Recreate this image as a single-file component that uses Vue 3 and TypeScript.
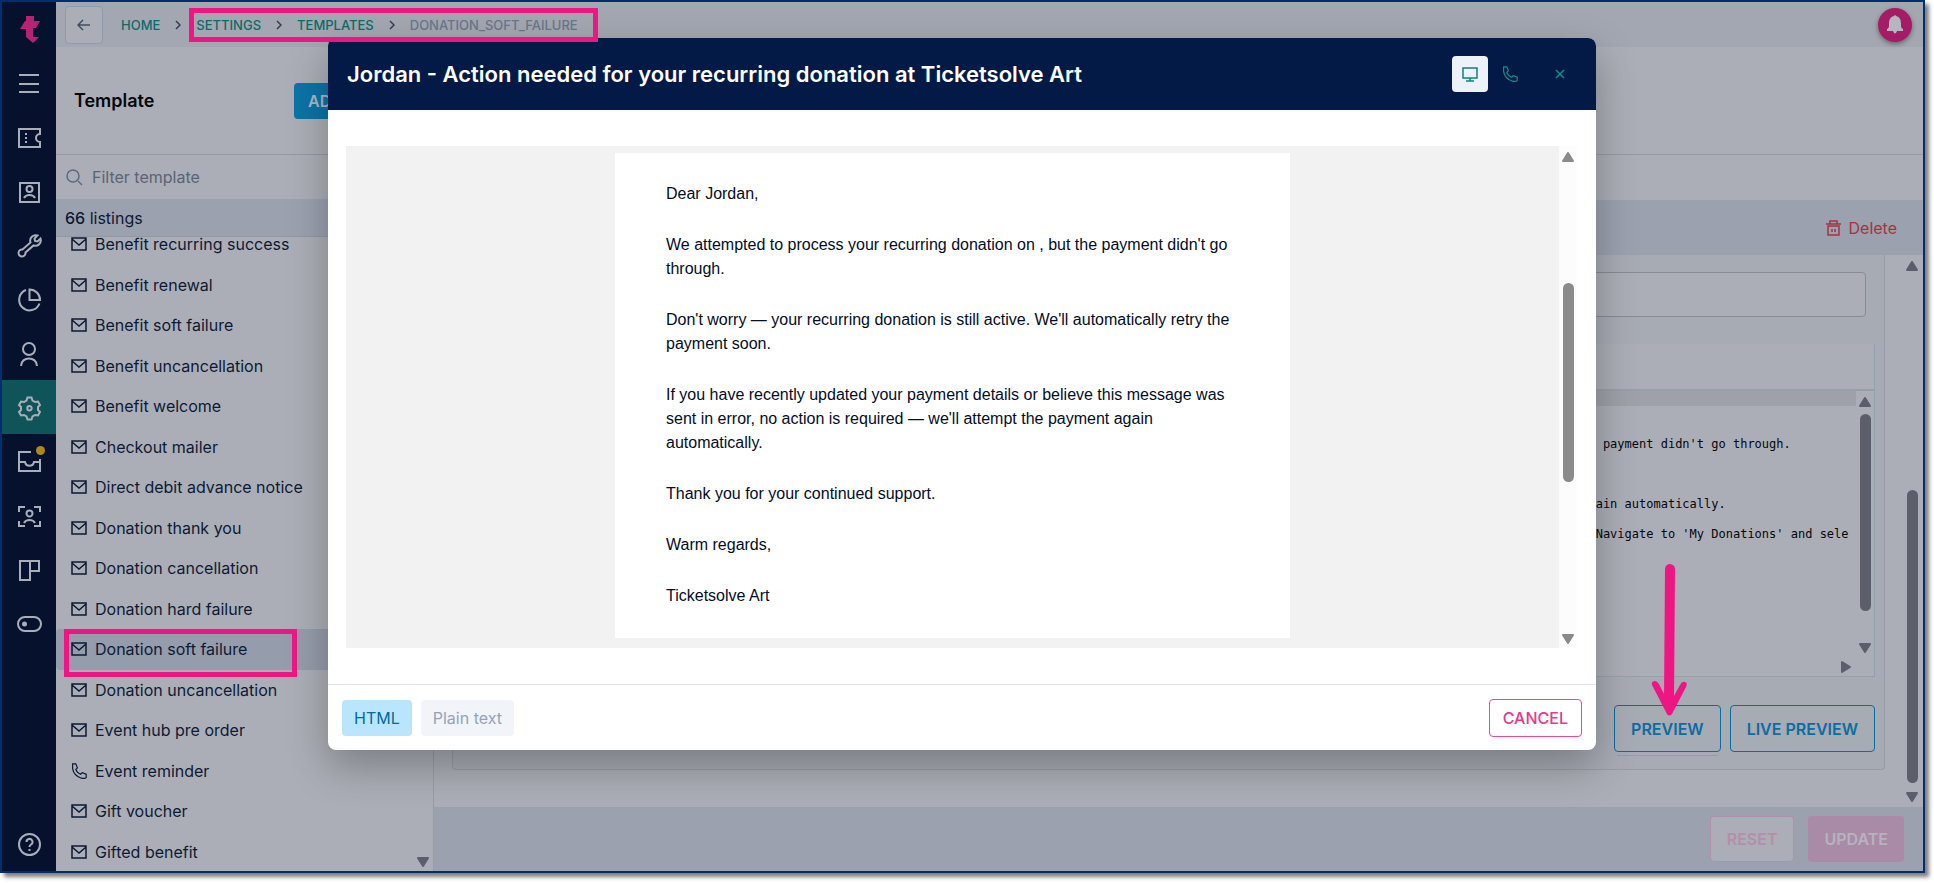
<script setup lang="ts">
import { ref } from 'vue'

interface RailItem {
  label: string
  path: string
  active?: boolean
  badge?: boolean
}

const railItems: RailItem[] = [
  { label: 'Menu', path: 'M2 3h20M2 12h20M2 20h20' },
  { label: 'Tickets', path: 'M2 3h21v5a4 4 0 0 0 0 8v5H2zM9 7v2M9 11v2M9 15v2' },
  { label: 'Contacts', path: 'M3 3h19v19H3zM12.500 6a3 3 0 1 1 0 6a3 3 0 0 1 0-6M7 18c2-4 9-4 11 0' },
  { label: 'Tools', path: 'M13.500 8.500A5.500 5.500 0 0 1 20.500 1.500L17.500 4.500l.500 2.500 2.500.500L23.500 4.500A5.500 5.500 0 0 1 16.500 11.500L8.500 18.500a3.500 3.500 0 1 1-3-3z' },
  { label: 'Reports', path: 'M9 2A10.500 10.500 0 1 0 22.500 15.500M12.500 1.500v10.500h10.500A10.500 10.500 0 0 0 12.500 1.500z' },
  { label: 'Customers', path: 'M12 1a6 6 0 1 1 0 12a6 6 0 0 1 0-12M4 24c0-10 16-10 16 0' },
  {
    label: 'Settings',
    path: 'M9.500 4.500L10.500 1.500h4l1 3 2.500 1.500 3-.500 2 3.500-2 2v3l2 2-2 3.500-3-.500-2.500 1.500-1 3h-4l-1-3L7 19l-3 .500-2-3.500 2-2v-3l-2-2L4 5.500 7 6zM12.500 10a2.200 2.200 0 1 1 0 4.400a2.200 2.200 0 0 1 0-4.400',
    active: true
  },
  { label: 'Inbox', path: 'M14 2H2v19h21V9M2 12h6c1 5 8 5 9 0h6', badge: true },
  { label: 'Scan', path: 'M2 8V3h6M17 3h6v5M23 17v5h-6M8 22H2v-5M12.500 6.500a3 3 0 1 1 0 6a3 3 0 0 1 0-6M7 19c2-4 9-4 11 0' },
  { label: 'Layout', path: 'M3 3h19v10h-9v9H3zM13 3v10' },
  { label: 'Toggles', path: 'M8 5h9a7 7 0 0 1 0 14H8A7 7 0 0 1 8 5zM7.500 10.500a1.500 1.500 0 1 1 0 3a1.500 1.500 0 0 1 0-3M7 12h1' }
]

const crumbs = ['HOME', 'SETTINGS', 'TEMPLATES']

const templates = [
  'Benefit recurring success',
  'Benefit renewal',
  'Benefit soft failure',
  'Benefit uncancellation',
  'Benefit welcome',
  'Checkout mailer',
  'Direct debit advance notice',
  'Donation thank you',
  'Donation cancellation',
  'Donation hard failure',
  'Donation soft failure',
  'Donation uncancellation',
  'Event hub pre order',
  'Event reminder',
  'Gift voucher',
  'Gifted benefit'
]
const selected = ref('Donation soft failure')
const filter = ref('')

const paragraphs = [
  'Dear Jordan,',
  "We attempted to process your recurring donation on , but the payment didn't go through.",
  "Don't worry — your recurring donation is still active. We'll automatically retry the payment soon.",
  "If you have recently updated your payment details or believe this message was sent in error, no action is required — we'll attempt the payment again automatically.",
  'Thank you for your continued support.',
  'Warm regards,',
  'Ticketsolve Art'
]

const source = ref(
  ["the payment didn't go through.", '', ' again automatically.', "   Navigate to 'My Donations' and sele"].join('\n')
)
const format = ref<'html' | 'text'>('html')
const phonePath =
  'M2 1h4l2 5-2 2c1 3 3 5 6 6l2-2 5 2v4c-1 2-4 1-6 1C7 17 3 13 2 7z'
</script>

<template>
  <div class="frame">
    <nav class="rail" aria-label="Main">
      <a href="#" class="rail-item" aria-label="Ticketsolve">
        <svg width="21" height="29" viewBox="0 0 21 29" class="logo">
          <path d="M7 1h8v5h6l-4 7h-3v9h6l-6 6-7-6v-8H1l5-8h1z" />
        </svg>
      </a>
      <a
        v-for="item in railItems"
        :key="item.label"
        href="#"
        class="rail-item section"
        :class="{ active: item.active }"
        :aria-label="item.label"
      >
        <svg width="25" height="25" viewBox="0 0 25 25" class="line-icon"><path :d="item.path" /></svg>
        <span v-if="item.badge" class="badge"></span>
      </a>
      <a href="#" class="rail-item help" aria-label="Help">
        <svg width="25" height="25" viewBox="0 0 25 25" class="line-icon">
          <circle cx="12.500" cy="12.500" r="10.500" />
          <path d="M9.500 10a3 3 0 1 1 4.500 2.500q-1.500 1-1.500 2.500M12.500 17v2" />
        </svg>
      </a>
    </nav>

    <div class="work">
      <header class="topbar">
        <button type="button" class="back" aria-label="Back">
          <svg width="14" height="12" viewBox="0 0 14 12"><path d="M13 6H2M6 1L1 6l5 5" /></svg>
        </button>
        <nav class="crumbs" aria-label="Breadcrumb">
          <template v-for="crumb in crumbs" :key="crumb">
            <a href="#">{{ crumb }}</a>
            <svg width="6" height="10" viewBox="0 0 6 10"><path d="M1 1l4 4-4 4" /></svg>
          </template>
          <span>DONATION_SOFT_FAILURE</span>
        </nav>
        <button type="button" class="bell" aria-label="Notifications">
          <svg width="16" height="19" viewBox="0 0 16 19">
            <path d="M7 1q1-2 2 0c4 1 5 4 5 8 0 3 0 4 2 5v2H0v-2c2-1 2-2 2-5 0-4 1-7 5-8zM6 16h4q-2 5-4 0z" />
          </svg>
        </button>
      </header>

      <div class="heading">
        <h1>Template</h1>
        <button type="button" class="add">ADD TEMPLATE</button>
      </div>

      <div class="columns">
        <aside class="side">
          <label class="filter">
            <svg width="17" height="17" viewBox="0 0 17 17"><circle cx="7" cy="7" r="6" /><path d="M12 12l4 4" /></svg>
            <input v-model="filter" type="text" placeholder="Filter template" aria-label="Filter template" />
          </label>
          <p class="count"><b>66</b> listings</p>
          <div class="scroller">
            <ul class="list">
              <li v-for="name in templates" :key="name">
                <button
                  type="button"
                  class="entry"
                  :class="{ selected: name === selected }"
                  @click="selected = name"
                >
                  <svg v-if="name === 'Event reminder'" width="16" height="16" viewBox="0 0 20 20">
                    <path :d="phonePath" />
                  </svg>
                  <svg v-else width="16" height="14" viewBox="0 0 16 14">
                    <path d="M1 1h14v12H1zM1 2l7 6 7-6" />
                  </svg>
                  {{ name }}
                </button>
              </li>
            </ul>
            <svg class="side-arrow" width="12" height="10" viewBox="0 0 12 10"><path d="M1 1h10L6 9z" /></svg>
          </div>
        </aside>

        <main class="main">
          <div class="toolbar">
            <button type="button" class="delete">
              <svg width="15" height="16" viewBox="0 0 15 16">
                <path d="M0 4h15M4 4V1h7v3M2 6v9h11V6zM6 9v3M9 9v3" />
              </svg>
              Delete
            </button>
          </div>
          <div class="content">
            <section class="card">
              <input type="text" class="subject" aria-label="Subject" />
              <div class="editor">
                <div class="editor-head"></div>
                <div class="editor-body">
                  <div class="editor-pane">
                    <div class="editor-strip"></div>
                    <textarea v-model="source" class="code" wrap="off" spellcheck="false" aria-label="Template source"></textarea>
                    <svg class="right-arrow" width="10" height="12" viewBox="0 0 10 12"><path d="M1 1v10l8-5z" /></svg>
                  </div>
                  <div class="bar editor-bar">
                    <svg width="12" height="10" viewBox="0 0 12 10"><path d="M6 1l5 8H1z" /></svg>
                    <i></i>
                    <svg width="12" height="10" viewBox="0 0 12 10"><path d="M1 1h10L6 9z" /></svg>
                  </div>
                </div>
              </div>
              <div class="previews">
                <button type="button" class="outline under">PREVIEW</button>
                <button type="button" class="outline">LIVE PREVIEW</button>
              </div>
            </section>
            <div class="bar page-bar">
              <svg width="12" height="10" viewBox="0 0 12 10"><path d="M6 1l5 8H1z" /></svg>
              <i></i>
              <svg width="12" height="10" viewBox="0 0 12 10"><path d="M1 1h10L6 9z" /></svg>
            </div>
          </div>
          <footer class="actions">
            <button type="button" class="reset">RESET</button>
            <button type="button" class="update">UPDATE</button>
          </footer>
        </main>
      </div>
    </div>

    <div class="overlay">
      <section class="modal" role="dialog" aria-modal="true" aria-labelledby="modal-title">
        <header class="modal-head">
          <h2 id="modal-title">Jordan - Action needed for your recurring donation at Ticketsolve Art</h2>
          <button type="button" class="device on" aria-label="Desktop">
            <svg width="16" height="15" viewBox="0 0 16 15"><path d="M1 1h14v10H1zM8 11v3M4 14h8" /></svg>
          </button>
          <button type="button" class="device" aria-label="Phone">
            <svg width="16" height="16" viewBox="0 0 20 20"><path :d="phonePath" /></svg>
          </button>
          <button type="button" class="device close" aria-label="Close">
            <svg width="10" height="10" viewBox="0 0 10 10"><path d="M1 1l8 8M9 1L1 9" /></svg>
          </button>
        </header>
        <div class="modal-body">
          <div class="canvas">
            <article class="mail">
              <p v-for="text in paragraphs" :key="text">{{ text }}</p>
            </article>
          </div>
          <div class="bar mail-bar">
            <svg width="12" height="10" viewBox="0 0 12 10"><path d="M6 1l5 8H1z" /></svg>
            <i></i>
            <svg width="12" height="10" viewBox="0 0 12 10"><path d="M1 1h10L6 9z" /></svg>
          </div>
        </div>
        <footer class="modal-foot">
          <button type="button" class="tab" :class="{ current: format === 'html' }" @click="format = 'html'">HTML</button>
          <button type="button" class="tab" :class="{ current: format === 'text' }" @click="format = 'text'">Plain text</button>
          <button type="button" class="cancel">CANCEL</button>
        </footer>
      </section>
    </div>

    <div class="mark mark-crumbs"></div>
    <div class="mark mark-entry"></div>
    <svg class="pointer" width="36" height="152" viewBox="0 0 36 152">
      <path d="M19 5L18 135" class="shaft" />
      <path d="M1 121q-1-4 3-4 2 0 4 3l6 12h9l6-11q2-4 5-3 3 1 1 5L21 150q-3 3-5 0z" class="tip" />
    </svg>
  </div>
</template>

<style>
body {
  margin: 0;
  background: #fff;
}
</style>

<style scoped>
* {
  box-sizing: border-box;
}
h1,
h2,
p,
ul {
  margin: 0;
  padding: 0;
}
button,
input,
textarea {
  font: inherit;
  color: inherit;
  margin: 0;
}
button {
  display: flex;
  align-items: center;
  justify-content: center;
  padding: 0;
  border: 0;
  background: none;
  border-radius: 4px;
}
svg {
  flex: none;
  fill: none;
  stroke: currentColor;
}
.frame {
  position: relative;
  display: flex;
  height: calc(100vh - 10px);
  min-height: 780px;
  margin: 0 9px 10px 0;
  border: 2px solid #022e70;
  box-shadow: 4px 4px 4px rgba(0, 0, 0, 0.5);
  background: #abaeb6;
  color: #0d1a35;
  font: 16px/24px Inter, "Liberation Sans", sans-serif;
}
.rail {
  display: flex;
  flex-direction: column;
  width: 54px;
  flex: none;
  background: #05112d;
}
.rail-item {
  position: relative;
  display: flex;
  align-items: center;
  justify-content: center;
  height: 54px;
  color: #a9aeb9;
}
.section {
  padding-top: 2px;
}
.rail-item.active {
  background: #0e5458;
}
.help {
  margin-top: auto;
}
.line-icon {
  stroke-width: 2;
}
.logo {
  fill: #b52473;
  stroke: none;
}
.badge {
  position: absolute;
  top: 12px;
  right: 11px;
  width: 9px;
  height: 9px;
  border-radius: 50%;
  background: #b1861b;
}
.work {
  display: flex;
  flex-direction: column;
  flex: 1;
  min-width: 0;
}
.topbar {
  display: flex;
  align-items: center;
  height: 45px;
  padding: 0 11px 0 9px;
  background: #a2a7b1;
}
.back {
  width: 38px;
  height: 38px;
  border: 1px solid #8f9bad;
  background: #abaeb6;
  color: #434d60;
  stroke-width: 1.5;
}
.crumbs {
  display: flex;
  align-items: center;
  gap: 15px;
  margin-left: 18px;
  font-size: 13px;
  font-weight: 500;
  color: #6a768a;
}
.crumbs a {
  color: #0f6b69;
  text-decoration: none;
}
.crumbs svg {
  stroke: #343e52;
  stroke-width: 1.5;
}
.bell {
  width: 34px;
  height: 34px;
  margin-left: auto;
  border-radius: 50%;
  background: #a31c65;
  box-shadow: 0 2px 5px rgba(0, 0, 0, 0.4);
}
.bell svg {
  fill: #b4b7bf;
  stroke: none;
}
.heading {
  display: flex;
  align-items: center;
  height: 108px;
  padding-left: 18px;
  border-bottom: 1px solid #9499a4;
}
h1 {
  width: 220px;
  font-size: 18px;
  font-weight: 600;
  color: #05070c;
}
.add {
  height: 36px;
  padding: 0 14px;
  background: #0c73a8;
  color: #afb8c2;
  font-weight: 600;
}
.columns {
  display: flex;
  flex: 1;
  min-height: 0;
}
.side {
  display: flex;
  flex-direction: column;
  width: 378px;
  flex: none;
  border-right: 1px solid #989ca7;
}
.filter {
  display: flex;
  align-items: center;
  gap: 9px;
  height: 44px;
  padding: 0 10px;
  color: #5d6a80;
}
.filter svg {
  stroke-width: 1.5;
}
.filter input {
  flex: 1;
  padding: 0;
  border: 0;
  outline: 0;
  background: none;
}
.filter input::placeholder {
  color: #596478;
  opacity: 1;
}
.count {
  height: 38px;
  padding-left: 9px;
  line-height: 38px;
  background: #9ba1af;
  border-bottom: 1px solid #9298a5;
}
.count b {
  font-weight: 500;
}
.scroller {
  position: relative;
  display: flex;
  flex: 1;
  min-height: 0;
  overflow: hidden;
}
.list {
  display: flex;
  flex-direction: column;
  flex: 1;
  margin: -13px 0 -1px;
  list-style: none;
}
.list li {
  display: flex;
  flex: 1;
}
.entry {
  flex: 1;
  gap: 8px;
  margin-right: 16px;
  padding-left: 15px;
  justify-content: flex-start;
}
.entry svg {
  width: 16px;
  stroke-width: 1.5;
}
.entry.selected {
  background: #959cab;
}
.side-arrow {
  position: absolute;
  right: 4px;
  bottom: 4px;
}
.side-arrow,
.right-arrow,
.bar svg {
  fill: currentColor;
  stroke-width: 2;
  stroke-linejoin: round;
  color: #5a5f69;
}
.main {
  display: flex;
  flex-direction: column;
  flex: 1;
  min-width: 0;
}
.toolbar {
  display: flex;
  align-items: center;
  justify-content: flex-end;
  height: 55px;
  margin-top: 45px;
  padding-right: 26px;
  background: #9ba1af;
}
.delete {
  gap: 8px;
  color: #a63340;
}
.delete svg {
  stroke-width: 1.5;
}
.content {
  display: flex;
  flex: 1;
  min-height: 0;
}
.card {
  display: flex;
  flex-direction: column;
  flex: 1;
  margin: 0 18px 37px 18px;
  padding: 17px 9px 17px 18px;
  border: 1px solid #969ba7;
  border-top: 0;
  border-radius: 0 0 4px 4px;
  background: #a7abb4;
}
.subject {
  height: 45px;
  margin-right: 9px;
  border: 1px solid #858b97;
  border-radius: 4px;
  background: #abaeb6;
}
.editor {
  display: flex;
  flex-direction: column;
  flex: 1;
  margin-top: 27px;
  border: 1px solid #969fae;
  border-top: 0;
  background: #abaeb6;
}
.editor-head {
  height: 47px;
  border-bottom: 2px solid #969fac;
}
.editor-body {
  display: flex;
  flex: 1;
}
.editor-pane {
  display: flex;
  flex-direction: column;
  flex: 1;
}
.editor-strip {
  height: 15px;
  background: #9ea1a8;
}
.code {
  flex: 1;
  align-self: flex-end;
  width: 282px;
  padding: 23px 0 0;
  border: 0;
  outline: 0;
  resize: none;
  overflow: hidden;
  background: none;
  color: #05070c;
  font: 12px/30px "DejaVu Sans Mono", monospace;
}
.right-arrow {
  align-self: flex-end;
  margin: 0 5px 3px;
}
.bar {
  display: flex;
  flex-direction: column;
  align-items: center;
  width: 18px;
  color: #5a5f69;
}
.bar i {
  width: 11px;
  border-radius: 6px;
  background: currentColor;
}
.editor-bar {
  padding: 6px 0 23px;
}
.editor-bar i {
  flex: 1;
  margin: 7px 0 32px;
}
.previews {
  display: flex;
  justify-content: flex-end;
  gap: 9px;
  margin-top: 28px;
}
.outline {
  position: relative;
  height: 47px;
  padding: 0 16px;
  border: 1px solid #0c6da0;
  color: #0c6da0;
  font-weight: 600;
}
.under::after {
  content: "";
  position: absolute;
  inset: auto 2px -5px;
  height: 1px;
  background: #86a0b4;
}
.page-bar {
  padding: 6px 0 5px;
  width: 18px;
  margin-right: 2px;
}
.page-bar i {
  height: 293px;
  margin: auto 0 9px;
}
.actions {
  display: flex;
  align-items: center;
  justify-content: flex-end;
  gap: 14px;
  height: 64px;
  padding: 0 19px;
  background: #9ba1af;
  font-weight: 600;
}
.reset,
.update {
  height: 46px;
  padding: 0 16px;
}
.reset {
  border: 1px solid #b48fab;
  background: #abaeb6;
  color: #b48fab;
}
.update {
  background: #a98ba8;
  color: #b6b3c0;
}
.overlay {
  position: absolute;
  inset: 0;
  display: flex;
  padding: 36px 327px 121px 326px;
}
.modal {
  display: flex;
  flex-direction: column;
  flex: 1;
  min-width: 0;
  overflow: hidden;
  border-radius: 8px;
  background: #fff;
  box-shadow: 0 16px 40px rgba(0, 0, 0, 0.28);
}
.modal-head {
  display: flex;
  align-items: center;
  gap: 4px;
  height: 72px;
  padding: 0 18px 0 19px;
  background: #031a47;
  color: #fff;
}
h2 {
  flex: 1;
  font-size: 22px;
  line-height: 32px;
  font-weight: 600;
}
.device {
  width: 36px;
  height: 36px;
  color: #0f8f87;
  stroke-width: 1.5;
}
.device.on {
  background: #edf1fa;
  color: #14807a;
}
.close {
  margin-left: 10px;
}
.modal-body {
  display: flex;
  flex: 1;
  min-height: 0;
  padding: 36px 19px 36px 18px;
}
.canvas {
  flex: 1;
  padding: 7px 0 10px;
  background: #f2f2f2;
}
.mail {
  width: 675px;
  max-width: 100%;
  height: 100%;
  margin: 0 auto;
  padding: 29px 51px 0;
  background: #fff;
  color: #030d26;
  font: 16px/24px "Liberation Sans", Arial, sans-serif;
}
.mail p {
  margin-bottom: 27px;
}
.mail-bar {
  padding: 6px 0 4px;
  background: #fcfcfc;
}
.mail-bar,
.mail-bar svg {
  color: #8b8b8b;
}
.mail-bar i {
  height: 199px;
  margin: 121px 0 auto;
}
.modal-foot {
  display: flex;
  align-items: center;
  gap: 9px;
  height: 66px;
  padding: 0 14px;
  border-top: 1px solid #e0e3ee;
}
.tab {
  height: 36px;
  padding: 0 12px;
  background: #f1f4f9;
  color: #94a3b8;
}
.tab.current {
  background: #b9e6fe;
  color: #0369a1;
}
.cancel {
  height: 38px;
  margin-left: auto;
  padding: 0 13px;
  border: 1px solid #ec4899;
  color: #e8388d;
  font-weight: 500;
}
.mark {
  position: absolute;
  border: 5px solid #ef1583;
}
.mark-crumbs {
  left: 187px;
  top: 6px;
  width: 409px;
  height: 34px;
}
.mark-entry {
  left: 62px;
  bottom: 194px;
  width: 233px;
  height: 48px;
}
.pointer {
  position: absolute;
  right: 236px;
  bottom: 155px;
}
.shaft {
  stroke: #ef1583;
  stroke-width: 10;
  stroke-linecap: round;
}
.tip {
  fill: #ef1583;
  stroke: none;
}
</style>
